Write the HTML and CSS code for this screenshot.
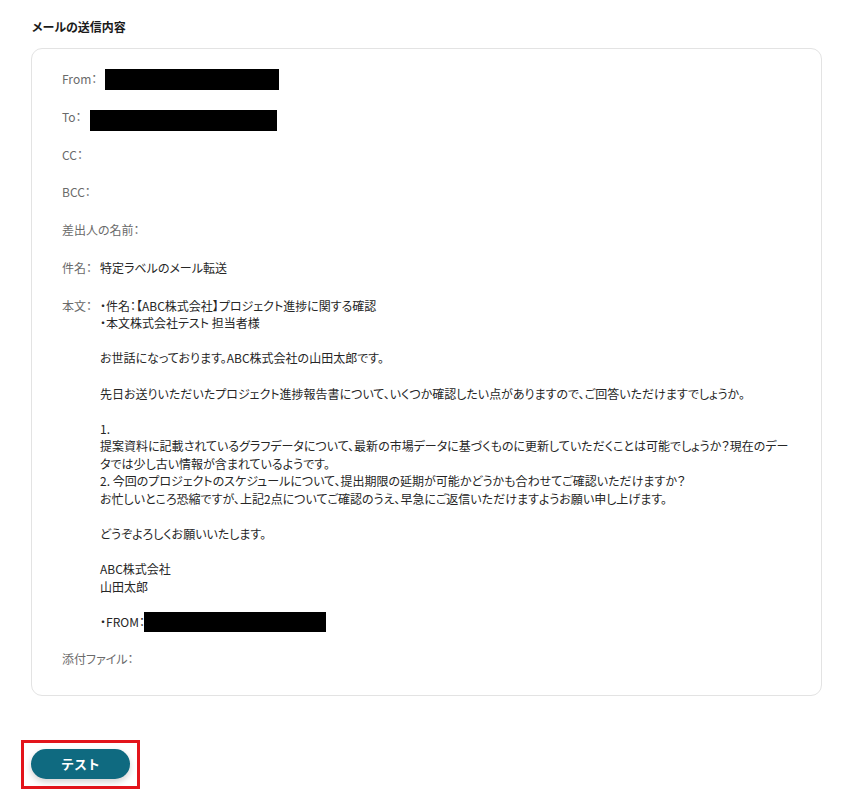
FILE: index.html
```html
<!DOCTYPE html>
<html lang="ja">
<head>
    <meta charset="UTF-8">
    <meta name="viewport" content="width=device-width, initial-scale=1.0">
    <title>メールの送信内容</title>
    <link rel="stylesheet" href="styles.css">
</head>
<body>
    <div class="page">
        <h2 class="section-title">メールの送信内容</h2>

        <div class="mail-card">
            <div class="mail-row">
                <span class="mail-label">From：</span>
                <span class="mail-value"><span class="redacted redacted-from"></span></span>
            </div>
            <div class="mail-row">
                <span class="mail-label">To：</span>
                <span class="mail-value"><span class="redacted redacted-to"></span></span>
            </div>
            <div class="mail-row">
                <span class="mail-label">CC：</span>
            </div>
            <div class="mail-row">
                <span class="mail-label">BCC：</span>
            </div>
            <div class="mail-row">
                <span class="mail-label">差出人の名前：</span>
            </div>
            <div class="mail-row">
                <span class="mail-label">件名：</span>
                <span class="mail-value">特定ラベルのメール転送</span>
            </div>
            <div class="mail-row">
                <span class="mail-label">本文：</span>
                <div class="mail-body">
                    <p>・件名：【ABC株式会社】プロジェクト進捗に関する確認</p>
                    <p>・本文株式会社テスト 担当者様</p>
                    <p class="blank"></p>
                    <p>お世話になっております。ABC株式会社の山田太郎です。</p>
                    <p class="blank"></p>
                    <p>先日お送りいただいたプロジェクト進捗報告書について、いくつか確認したい点がありますので、ご回答いただけますでしょうか。</p>
                    <p class="blank"></p>
                    <p>1.</p>
                    <p>提案資料に記載されているグラフデータについて、最新の市場データに基づくものに更新していただくことは可能でしょうか？現在のデータでは少し古い情報が含まれているようです。</p>
                    <p>2. 今回のプロジェクトのスケジュールについて、提出期限の延期が可能かどうかも合わせてご確認いただけますか？</p>
                    <p>お忙しいところ恐縮ですが、上記2点についてご確認のうえ、早急にご返信いただけますようお願い申し上げます。</p>
                    <p class="blank"></p>
                    <p>どうぞよろしくお願いいたします。</p>
                    <p class="blank"></p>
                    <p>ABC株式会社</p>
                    <p>山田太郎</p>
                    <p class="blank"></p>
                    <p>・FROM：<span class="redacted redacted-sign"></span></p>
                </div>
            </div>
            <div class="mail-row last">
                <span class="mail-label">添付ファイル：</span>
            </div>
        </div>

        <div class="highlight">
            <button type="button" class="test-button">テスト</button>
        </div>
    </div>
</body>
</html>
```

FILE: styles.css
```css
body {
    margin: 0;
    padding: 0;
    background-color: #ffffff;
    font-family: "Noto Sans CJK JP", "Noto Sans", sans-serif;
    font-feature-settings: "palt";
    color: #333333;
}

.page {
    padding: 17px 0 0 31px;
    width: 791px;
}

.section-title {
    font-size: 12px;
    font-weight: bold;
    line-height: 20px;
    margin: 0 0 11px 1px;
    color: #1a1a1a;
}

.mail-card {
    border: 1px solid #e3e3e3;
    border-radius: 11px;
    padding: 21px 24px 27px 30px;
}

.mail-row {
    display: flex;
    align-items: flex-start;
    font-size: 12px;
    line-height: 18px;
    margin-bottom: 19.8px;
}

.mail-row.last {
    margin-bottom: 0;
}

.mail-label {
    color: #6a6a6a;
    white-space: nowrap;
    margin-right: 8px;
}

.mail-value {
    color: #262626;
}

.mail-body {
    color: #262626;
    line-height: 17.55px;
}

.mail-body p {
    margin: 0;
}

.mail-body .blank {
    height: 17.55px;
}

.redacted {
    display: inline-block;
    background: #000000;
    vertical-align: top;
}

.redacted-from {
    width: 174px;
    height: 21px;
    margin: -1px 0 -2px;
}

.redacted-to {
    width: 187px;
    height: 21px;
    margin: 2px 0 -5px;
}

.redacted-sign {
    width: 182px;
    height: 20px;
    margin: -1px 0 -2px -1px;
}

.highlight {
    display: inline-block;
    margin: 44px 0 0 -10px;
    padding: 6px 7px 7px 7px;
    border: 3px solid #e3141b;
}

.test-button {
    display: block;
    width: 99px;
    height: 30px;
    border: none;
    border-radius: 15px;
    background-color: #0f6a80;
    color: #ffffff;
    font-family: "Noto Sans CJK JP", sans-serif;
    font-size: 13px;
    font-weight: bold;
    box-shadow: 0 3px 6px rgba(0, 0, 0, 0.18);
    cursor: pointer;
}
```
